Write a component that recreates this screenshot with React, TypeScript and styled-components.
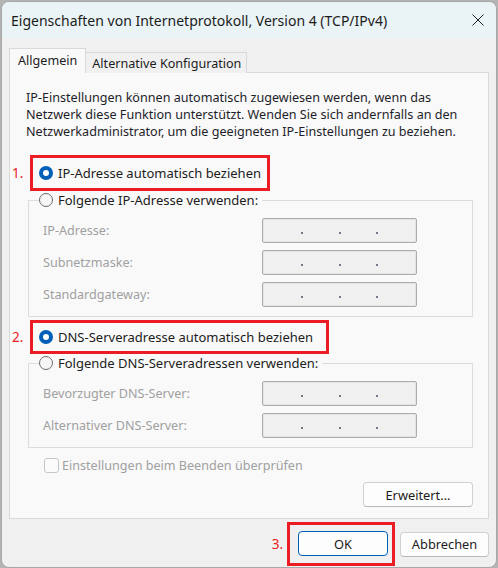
import styled, { createGlobalStyle } from 'styled-components'

const GlobalStyle = createGlobalStyle`
  html, body {
    margin: 0;
    padding: 0;
    background: #b4b4b4;
  }
  body {
    font-family: "Noto Sans", "Open Sans", sans-serif;
    color: #1c1c1c;
  }
  #root {
    height: 568px;
  }
`

const RED = '#ec1c24'

const Window = styled.div`
  margin: 1px 0 0 1px;
  width: 496px;
  height: 567px;
  box-sizing: border-box;
  border: 1px solid #a7a7a7;
  border-radius: 8px;
  background: #f0f0f0;
  overflow: hidden;
  display: flex;
  flex-direction: column;
`

const TitleBar = styled.div`
  height: 36px;
  flex: 0 0 36px;
  background: #eaf4f6;
  display: flex;
  align-items: center;
  justify-content: space-between;
  padding: 0 12px 0 9px;
  font-size: 14px;
`

const CloseIcon = styled.svg`
  width: 12px;
  height: 12px;
  display: block;
`

const Body = styled.div`
  padding: 10px 7px 0 7px;
  display: flex;
  flex-direction: column;
  font-size: 12.6px;
`

const TabStrip = styled.div`
  display: flex;
  align-items: flex-end;
  height: 25px;
  margin-bottom: -1px;
`

const Tab = styled.div<{ $active?: boolean }>`
  box-sizing: border-box;
  display: flex;
  align-items: center;
  border: 1px solid #d9d9d9;
  border-bottom: none;
  position: relative;
  z-index: ${(p) => (p.$active ? 1 : 0)};
  height: ${(p) => (p.$active ? '25px' : '21px')};
  padding: ${(p) => (p.$active ? '0 8px 1px 8px' : '0 5px 0 6px')};
  background: ${(p) => (p.$active ? '#f9f9f9' : '#f0f0f0')};
  ${(p) => !p.$active && 'border-left: none;'}
`

const Panel = styled.div`
  border: 1px solid #d9d9d9;
  background: #f9f9f9;
  padding: 0 15px 11px 2px;
  display: flex;
  flex-direction: column;
`

const Description = styled.p`
  margin: 16px 0 0 14px;
  line-height: 17px;
  color: #1e1e2a;
`

const MarkedRow = styled.div<{ $top: number }>`
  display: flex;
  align-items: center;
  margin-top: ${(p) => p.$top}px;
`

const Marker = styled.span<{ $width?: number }>`
  color: ${RED};
  font-size: 13.5px;
  width: ${(p) => (p.$width ? `${p.$width}px` : 'auto')};
  margin-right: ${(p) => (p.$width ? 0 : 4)}px;
`

const RedBox = styled.div<{ $height: number; $right: number }>`
  box-sizing: border-box;
  height: ${(p) => p.$height}px;
  border: 3px solid ${RED};
  padding: 0 ${(p) => p.$right}px 0 6px;
  display: flex;
  align-items: center;
  gap: 5px;
  font-size: 13px;
`

const Radio = styled.span<{ $checked?: boolean }>`
  box-sizing: border-box;
  width: 14px;
  height: 14px;
  flex: 0 0 14px;
  border-radius: 50%;
  background: ${(p) => (p.$checked ? '#ffffff' : '#f6f6f6')};
  border: ${(p) => (p.$checked ? '4px solid #005fb8' : '1px solid #6e6e6e')};
`

const Group = styled.fieldset`
  margin: 0 0 0 16px;
  padding: 9px 0 9px 10px;
  border: 1px solid #dcdcdc;
  min-width: 0;
  display: flex;
  flex-direction: column;
  gap: 7px;
`

const Legend = styled.legend`
  padding: 0 4px 0 0;
  height: 18px;
  display: flex;
  align-items: center;
  gap: 5px;
  font-size: 13px;
`

const FieldRow = styled.div`
  display: flex;
  align-items: center;
  height: 25px;
  padding-left: 4px;
`

const FieldLabel = styled.span`
  flex: 0 0 219px;
  color: #a0a0a0;
`

const IpBox = styled.div`
  box-sizing: border-box;
  width: 155px;
  height: 25px;
  border: 1px solid #adadad;
  border-radius: 2px;
  box-shadow: inset 0 0 0 1px #e4e4e4;
  background: #f0f0f0;
  display: flex;
  align-items: flex-end;
  padding: 0 3px 8px 3px;
`

const IpSegment = styled.span`
  flex: 1;
`

const IpDot = styled.span`
  width: 2px;
  height: 2px;
  background: #77778a;
`

const CheckRow = styled.div`
  display: flex;
  align-items: center;
  gap: 3px;
  margin: 9px 0 0 32px;
  height: 16px;
  color: #a0a0a0;
`

const CheckBox = styled.span`
  box-sizing: border-box;
  width: 15px;
  height: 15px;
  border: 1px solid #c6c6c6;
  border-radius: 3px;
  background: #fbfbfb;
`

const PanelActions = styled.div`
  display: flex;
  justify-content: flex-end;
  margin-top: 9px;
`

const Button = styled.button<{ $width: number; $default?: boolean }>`
  box-sizing: border-box;
  width: ${(p) => p.$width}px;
  height: 25px;
  border-radius: 4px;
  border: 1px solid ${(p) => (p.$default ? '#005fb8' : '#d0d0d0')};
  border-bottom-color: ${(p) => (p.$default ? '#005fb8' : '#b9b9b9')};
  background: #fdfdfd;
  font-family: inherit;
  font-size: 12.8px;
  color: #1c1c1c;
  padding: 0;
`

const Footer = styled.div`
  display: flex;
  justify-content: flex-end;
  align-items: center;
  margin-top: 3px;
  gap: 5px;
`

const OkFrame = styled.div`
  box-sizing: border-box;
  height: 44px;
  border: 3px solid ${RED};
  padding: 6px 4px 7px 8px;
`

const MarkedFooter = styled.div`
  display: flex;
  align-items: center;
`

const IpField = () => (
  <IpBox>
    <IpSegment />
    <IpDot />
    <IpSegment />
    <IpDot />
    <IpSegment />
    <IpDot />
    <IpSegment />
  </IpBox>
)

const ipRows = ['IP-Adresse:', 'Subnetzmaske:', 'Standardgateway:']
const dnsRows = ['Bevorzugter DNS-Server:', 'Alternativer DNS-Server:']

export default function App() {
  return (
    <>
      <GlobalStyle />
      <Window>
        <TitleBar>
          <span>Eigenschaften von Internetprotokoll, Version 4 (TCP/IPv4)</span>
          <CloseIcon viewBox="0 0 12 12">
            <path d="M0.5 0.5 L11.5 11.5 M11.5 0.5 L0.5 11.5" stroke="#1c1c1c" strokeWidth="1" fill="none" />
          </CloseIcon>
        </TitleBar>
        <Body>
          <TabStrip>
            <Tab $active>Allgemein</Tab>
            <Tab>Alternative Konfiguration</Tab>
          </TabStrip>
          <Panel>
            <Description>
              IP-Einstellungen können automatisch zugewiesen werden, wenn das
              <br />
              Netzwerk diese Funktion unterstützt. Wenden Sie sich andernfalls an den
              <br />
              Netzwerkadministrator, um die geeigneten IP-Einstellungen zu beziehen.
            </Description>

            <MarkedRow $top={15}>
              <Marker $width={18}>1.</Marker>
              <RedBox $height={36} $right={6}>
                <Radio $checked />
                IP-Adresse automatisch beziehen
              </RedBox>
            </MarkedRow>

            <Group>
              <Legend>
                <Radio />
                Folgende IP-Adresse verwenden:
              </Legend>
              {ipRows.map((label) => (
                <FieldRow key={label}>
                  <FieldLabel>{label}</FieldLabel>
                  <IpField />
                </FieldRow>
              ))}
            </Group>

            <MarkedRow $top={3}>
              <Marker $width={18}>2.</Marker>
              <RedBox $height={34} $right={13}>
                <Radio $checked />
                DNS-Serveradresse automatisch beziehen
              </RedBox>
            </MarkedRow>

            <Group>
              <Legend>
                <Radio />
                Folgende DNS-Serveradressen verwenden:
              </Legend>
              {dnsRows.map((label) => (
                <FieldRow key={label}>
                  <FieldLabel>{label}</FieldLabel>
                  <IpField />
                </FieldRow>
              ))}
            </Group>

            <CheckRow>
              <CheckBox />
              Einstellungen beim Beenden überprüfen
            </CheckRow>

            <PanelActions>
              <Button $width={110}>Erweitert...</Button>
            </PanelActions>
          </Panel>

          <Footer>
            <MarkedFooter>
              <Marker>3.</Marker>
              <OkFrame>
                <Button $width={90} $default>OK</Button>
              </OkFrame>
            </MarkedFooter>
            <Button $width={89}>Abbrechen</Button>
          </Footer>
        </Body>
      </Window>
    </>
  )
}
